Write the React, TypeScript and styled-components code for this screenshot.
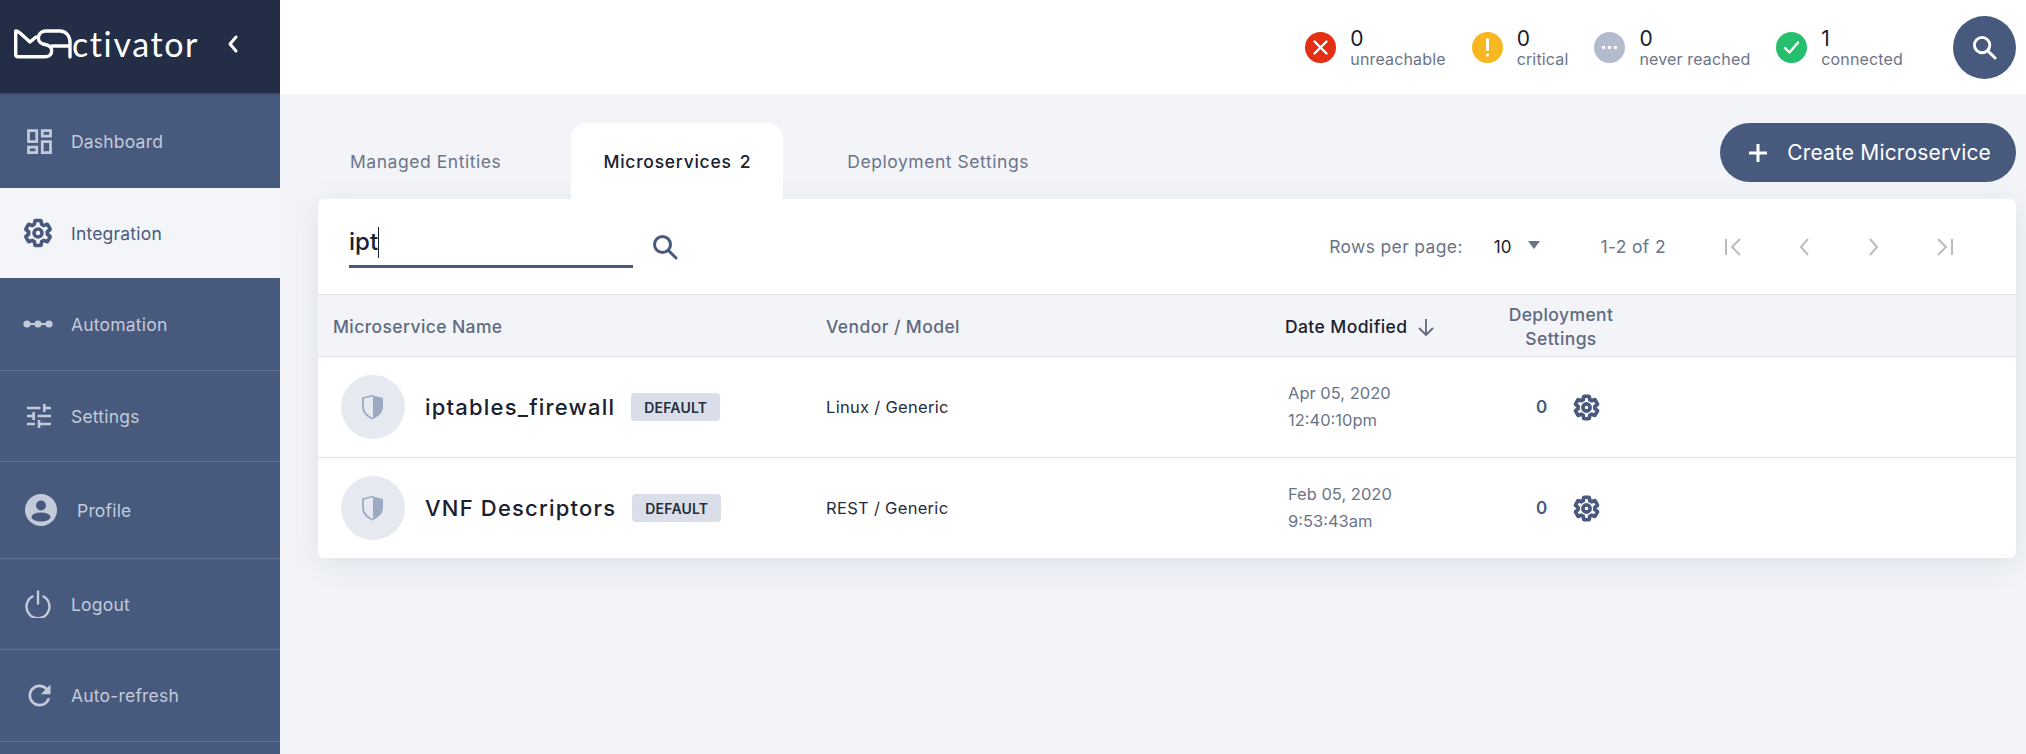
import React from "react";
import styled, { createGlobalStyle } from "styled-components";
import { MdOutlineDashboard, MdTune, MdRefresh } from "react-icons/md";

const FONT = `"Inter", "Roboto", "Liberation Sans", sans-serif`;

const GlobalStyle = createGlobalStyle`
  html, body {
    margin: 0;
    padding: 0;
    background: #f2f4f8;
    font-family: ${FONT};
  }
  * { box-sizing: border-box; }
`;

const navItems = [
  { key: "dashboard", label: "Dashboard", h: 93 },
  { key: "integration", label: "Integration", h: 90, active: true },
  { key: "automation", label: "Automation", h: 93, line: true },
  { key: "settings", label: "Settings", h: 91, line: true },
  { key: "profile", label: "Profile", h: 97, line: true },
  { key: "logout", label: "Logout", h: 91, line: true },
  { key: "refresh", label: "Auto-refresh", h: 92, line: true },
];

const statuses = [
  { kind: "red", value: 0, label: "unreachable" },
  { kind: "yellow", value: 0, label: "critical" },
  { kind: "grey", value: 0, label: "never reached" },
  { kind: "green", value: 1, label: "connected" },
];

const rows = [
  { name: "iptables_firewall", vendor: "Linux / Generic", date: "Apr 05, 2020", time: "12:40:10pm" },
  { name: "VNF Descriptors", vendor: "REST / Generic", date: "Feb 05, 2020", time: "9:53:43am" },
];

function Gear({ size, weight }: { size: number; weight: number }) {
  return (
    <svg width={size} height={size} viewBox="0 0 24 24" fill="none" stroke="currentColor" strokeWidth={weight} strokeLinejoin="round">
      <path d="M19.43 12.98c.04-.32.07-.64.07-.98 0-.34-.03-.66-.07-.98l2.11-1.65c.19-.15.24-.42.12-.64l-2-3.46c-.09-.16-.26-.25-.44-.25-.06 0-.12.01-.17.03l-2.49 1c-.52-.4-1.08-.73-1.69-.98l-.38-2.65C14.46 2.18 14.25 2 14 2h-4c-.25 0-.46.18-.49.42l-.38 2.65c-.61.25-1.17.59-1.69.98l-2.49-1c-.06-.02-.12-.03-.18-.03-.17 0-.34.09-.43.25l-2 3.46c-.13.22-.07.49.12.64l2.11 1.65c-.04.32-.07.65-.07.98 0 .33.03.66.07.98l-2.11 1.65c-.19.15-.24.42-.12.64l2 3.46c.09.16.26.25.44.25.06 0 .12-.01.17-.03l2.49-1c.52.4 1.08.73 1.69.98l.38 2.65c.03.24.24.42.49.42h4c.25 0 .46-.18.49-.42l.38-2.65c.61-.25 1.17-.59 1.69-.98l2.49 1c.06.02.12.03.18.03.17 0 .34-.09.43-.25l2-3.46c.12-.22.07-.49-.12-.64l-2.11-1.65z" />
      <circle cx="12" cy="12" r="3.2" />
    </svg>
  );
}

function NavIcon({ name }: { name: string }) {
  if (name === "dashboard") return <MdOutlineDashboard size={33} />;
  if (name === "integration") return <Gear size={30} weight={2.9} />;
  if (name === "settings") return <MdTune size={32} />;
  if (name === "refresh") return <MdRefresh size={33} />;
  if (name === "automation")
    return (
      <svg width="30" height="10" viewBox="0 0 30 10" fill="currentColor">
        <circle cx="4" cy="5" r="3.6" />
        <circle cx="15" cy="5" r="3.6" />
        <circle cx="26" cy="5" r="3.6" />
        <rect x="3" y="4" width="24" height="2" />
      </svg>
    );
  if (name === "profile")
    return (
      <svg width="32" height="32" viewBox="0 0 32 32">
        <circle cx="16" cy="16" r="16" fill="currentColor" />
        <circle cx="16" cy="11.5" r="5" fill="#475a7e" />
        <ellipse cx="16" cy="23" rx="9.5" ry="4.6" fill="#475a7e" />
      </svg>
    );
  return (
    <svg width="30" height="28" viewBox="-1 0 30 28" fill="none" stroke="currentColor" strokeWidth="2.4" strokeLinecap="round">
      <path d="M8.500 6.500a11.500 11.500 0 1 0 11 0" />
      <path d="M14 1.500v12" />
    </svg>
  );
}

function StatusIcon({ kind }: { kind: string }) {
  return (
    <StatusDot $kind={kind}>
      <svg width="31" height="31" viewBox="0 0 31 31" fill="none" stroke="#fff" strokeWidth="2.4" strokeLinecap="round" strokeLinejoin="round">
        {kind === "red" && <path d="M9.500 9.500l12 12M21.500 9.500l-12 12" />}
        {kind === "yellow" && (
          <>
            <path d="M15.500 7.500v10" strokeWidth="3" />
            <circle cx="15.500" cy="23" r="1.600" fill="#fff" stroke="none" />
          </>
        )}
        {kind === "grey" && (
          <g fill="#fff" stroke="none">
            <circle cx="9.500" cy="15.500" r="1.700" />
            <circle cx="15.500" cy="15.500" r="1.700" />
            <circle cx="21.500" cy="15.500" r="1.700" />
          </g>
        )}
        {kind === "green" && <path d="M9 16l4.500 4.500L22 10.500" />}
      </svg>
    </StatusDot>
  );
}

function SearchGlyph({ size, color }: { size: number; color: string }) {
  return (
    <svg width={size} height={size} viewBox="0 0 26 26" fill="none" stroke={color} strokeWidth="3" strokeLinecap="round">
      <circle cx="10.500" cy="10.500" r="8" />
      <path d="M16.500 16.500l7.500 7.500" />
    </svg>
  );
}

function Shield() {
  return (
    <svg width="24" height="26" viewBox="0 0 24 26">
      <path d="M12 1.500L22 4v9c0 5.500-4.500 9.500-10 12V1.500z" fill="#9ba9c2" />
      <path d="M12 1.500L2 4v9c0 5.500 4.500 9.500 10 12" fill="none" stroke="#9ba9c2" strokeWidth="1.800" strokeLinejoin="round" />
    </svg>
  );
}

function Pager({ dir }: { dir: "first" | "prev" | "next" | "last" }) {
  return (
    <svg width="20" height="20" viewBox="0 0 20 20" fill="none" stroke="#bcbcbc" strokeWidth="2">
      {dir === "first" && <path d="M2 2v16M16 2L8 10l8 8" />}
      {dir === "prev" && <path d="M14 2l-7 8 7 8" />}
      {dir === "next" && <path d="M6 2l7 8-7 8" />}
      {dir === "last" && <path d="M18 2v16M4 2l8 8-8 8" />}
    </svg>
  );
}

export default function App() {
  return (
    <Page>
      <GlobalStyle />
      <Sidebar>
        <Brand>
          <Logo>
            <svg width="58" height="30" viewBox="14 29 58 30" fill="none" stroke="#fff" strokeWidth="3.4" strokeLinejoin="round" strokeLinecap="round">
              <path d="M36 37L30 42L20 33Q17.500 31 15.700 31L15.700 54Q15.700 56.800 18 56.800L45 56.800C53 56.800 54 47 47 45L43 44C36 42 37 31 46 31L60 31C66 31 70 36 70 42L70 57M52 46L70 46" />
            </svg>
            <LogoText>ctivator</LogoText>
          </Logo>
          <Collapse>
            <svg width="14" height="20" viewBox="0 0 14 20" fill="none" stroke="#fff" strokeWidth="3" strokeLinecap="round" strokeLinejoin="round">
              <path d="M10 3l-6 7 6 7" />
            </svg>
          </Collapse>
        </Brand>
        {navItems.map((item) => (
          <NavItem key={item.key} $active={item.active} $line={item.line} $h={item.h}>
            <NavIconBox $wide={item.key === "profile"}>
              <NavIcon name={item.key} />
            </NavIconBox>
            {item.label}
          </NavItem>
        ))}
      </Sidebar>
      <Main>
        <TopBar>
          {statuses.map((s) => (
            <Status key={s.kind}>
              <StatusIcon kind={s.kind} />
              <StatusText>
                <StatusValue>{s.value}</StatusValue>
                <StatusLabel>{s.label}</StatusLabel>
              </StatusText>
            </Status>
          ))}
          <RoundButton>
            <SearchGlyph size={25} color="#fff" />
          </RoundButton>
        </TopBar>
        <Content>
          <TabRow>
            <Tab>Managed Entities</Tab>
            <Tab $active>
              Microservices <span>2</span>
            </Tab>
            <Tab>Deployment Settings</Tab>
            <CreateButton>
              <svg width="22" height="22" viewBox="0 0 22 22" stroke="#fff" strokeWidth="3">
                <path d="M11 2v18M2 11h18" />
              </svg>
              Create Microservice
            </CreateButton>
          </TabRow>
          <Card>
            <Toolbar>
              <SearchField>
                ipt<Caret />
              </SearchField>
              <SearchIcon>
                <SearchGlyph size={26} color="#475a7e" />
              </SearchIcon>
              <RowsLabel>Rows per page:</RowsLabel>
              <RowsValue>10</RowsValue>
              <RowsArrow />
              <RangeLabel>1-2 of 2</RangeLabel>
              <PagerGroup>
                <Pager dir="first" />
                <Pager dir="prev" />
                <Pager dir="next" />
                <Pager dir="last" />
              </PagerGroup>
            </Toolbar>
            <HeaderRow>
              <HeadCell>Microservice Name</HeadCell>
              <HeadCell>Vendor / Model</HeadCell>
              <SortCell>
                Date Modified
                <svg width="18" height="20" viewBox="0 0 18 20" fill="none" stroke="#5f6a80" strokeWidth="1.800">
                  <path d="M9 2v16M2 11l7 7 7-7" />
                </svg>
              </SortCell>
              <DeployHead>
                Deployment
                <br />
                Settings
              </DeployHead>
            </HeaderRow>
            {rows.map((row) => (
              <Row key={row.name}>
                <NameCell>
                  <ShieldCircle>
                    <Shield />
                  </ShieldCircle>
                  <RowName>{row.name}</RowName>
                  <Badge>DEFAULT</Badge>
                </NameCell>
                <VendorCell>{row.vendor}</VendorCell>
                <DateCell>
                  {row.date}
                  <br />
                  {row.time}
                </DateCell>
                <DeployCell>
                  <Count>0</Count>
                  <Gear size={27} weight={3.3} />
                </DeployCell>
              </Row>
            ))}
          </Card>
        </Content>
      </Main>
    </Page>
  );
}

const Page = styled.div`
  display: flex;
  width: 2026px;
  height: 754px;
  overflow: hidden;
  background: #f2f4f8;
`;

const Sidebar = styled.aside`
  width: 280px;
  flex: none;
  height: 754px;
  background: #475a7e;
`;

const Brand = styled.div`
  height: 95px;
  background: #232d45;
  border-bottom: 2px solid #3b4b6c;
  display: flex;
  align-items: flex-start;
  padding: 29px 0 0 14px;
`;

const Logo = styled.div`
  display: flex;
  align-items: flex-end;
  width: 204px;
`;

const LogoText = styled.span`
  font-family: "Lato", sans-serif;
  font-weight: 400;
  font-size: 34px;
  line-height: 30px;
  color: #fff;
  letter-spacing: 1.6px;
`;

const Collapse = styled.div`
  margin: 5px 0 0 8px;
`;

const NavItem = styled.div<{ $active?: boolean; $line?: boolean; $h: number }>`
  height: ${(p) => p.$h}px;
  display: flex;
  align-items: center;
  padding-left: 24px;
  font-size: 17.5px;
  letter-spacing: 0.2px;
  color: ${(p) => (p.$active ? "#475a7e" : "#c3cad9")};
  background: ${(p) => (p.$active ? "#f3f5f9" : "transparent")};
  border-bottom: ${(p) => (p.$line ? "1px solid #5f7092" : "none")};
`;

const NavIconBox = styled.span<{ $wide?: boolean }>`
  width: ${(p) => (p.$wide ? 52 : 48)}px;
  display: flex;
  align-items: center;
  justify-content: flex-start;
  margin-left: ${(p) => (p.$wide ? "1px" : "-1px")};
`;

const Main = styled.main`
  flex: 1;
  min-width: 0;
`;

const TopBar = styled.header`
  height: 94px;
  background: #fff;
  display: flex;
  align-items: center;
  justify-content: flex-end;
  padding-right: 10px;
  gap: 26px;
`;

const Status = styled.div`
  display: flex;
  align-items: center;
  gap: 14px;
`;

const StatusDot = styled.div<{ $kind: string }>`
  width: 31px;
  height: 31px;
  border-radius: 50%;
  background: ${(p) =>
    p.$kind === "red" ? "#e32f13" : p.$kind === "yellow" ? "#f8b720" : p.$kind === "grey" ? "#b2bccd" : "#26bf6d"};
`;

const StatusText = styled.div`
  display: flex;
  flex-direction: column;
`;

const StatusValue = styled.span`
  font-size: 21px;
  line-height: 24px;
  color: #1a2030;
`;

const StatusLabel = styled.span`
  font-size: 16px;
  line-height: 16px;
  letter-spacing: 0.15px;
  color: #6b7488;
`;

const RoundButton = styled.div`
  width: 63px;
  height: 63px;
  border-radius: 50%;
  background: #475a7e;
  display: flex;
  align-items: center;
  justify-content: center;
  margin-left: 24px;
`;

const Content = styled.div`
  padding: 29px 10px 0 38px;
`;

const TabRow = styled.div`
  display: flex;
  align-items: flex-start;
  height: 76px;
`;

const Tab = styled.div<{ $active?: boolean }>`
  height: 76px;
  display: flex;
  align-items: flex-start;
  gap: 8px;
  padding: 29px 32px 0;
  font-size: 17.5px;
  letter-spacing: ${(p) => (p.$active ? "0.75px" : "0.55px")};
  line-height: 20px;
  border-radius: 16px 16px 0 0;
  color: ${(p) => (p.$active ? "#1a2030" : "#6b7488")};
  background: ${(p) => (p.$active ? "#fff" : "transparent")};
  font-weight: ${(p) => (p.$active ? 500 : 400)};
  margin: ${(p) => (p.$active ? "0 32px 0 38px" : "0")};
`;

const CreateButton = styled.div`
  margin-left: auto;
  height: 59px;
  padding: 0 25px 0 27px;
  border-radius: 30px;
  background: #475a7e;
  color: #fff;
  font-size: 21px;
  letter-spacing: 0.15px;
  display: flex;
  align-items: center;
  gap: 18px;
`;

const Card = styled.section`
  background: #fff;
  border-radius: 6px;
  box-shadow: 0 6px 30px rgba(71, 90, 126, 0.12);
  overflow: hidden;
`;

const Toolbar = styled.div`
  height: 96px;
  display: flex;
  align-items: center;
  padding-left: 31px;
  border-bottom: 1px solid #e2e4e8;
`;

const SearchField = styled.div`
  align-self: flex-start;
  width: 284px;
  height: 41px;
  margin-top: 28px;
  border-bottom: 3px solid #475a7e;
  font-size: 24px;
  font-weight: 500;
  line-height: 30px;
  color: #1a2030;
  display: flex;
  align-items: flex-start;
`;

const Caret = styled.span`
  width: 1px;
  height: 31px;
  background: #1a2030;
  display: block;
`;

const SearchIcon = styled.div`
  margin-left: 19px;
  display: flex;
  margin-right: auto;
`;

const RowsLabel = styled.span`
  font-size: 17.5px;
  letter-spacing: 0.35px;
  color: #6b7488;
`;

const RowsValue = styled.span`
  font-size: 17px;
  color: #1a2030;
  margin-left: 31px;
`;

const RowsArrow = styled.span`
  width: 0;
  height: 0;
  border-left: 6.5px solid transparent;
  border-right: 6.5px solid transparent;
  border-top: 8px solid #6b7488;
  margin: 0 0 4px 17px;
`;

const RangeLabel = styled.span`
  font-size: 17.5px;
  letter-spacing: 0.35px;
  color: #6b7488;
  margin-left: 60px;
`;

const PagerGroup = styled.div`
  display: flex;
  gap: 50px;
  margin: 0 62px 0 58px;
`;

const columns = "508px 459px 206px 140px";

const HeaderRow = styled.div`
  display: grid;
  grid-template-columns: ${columns};
  align-items: center;
  height: 62px;
  padding-top: 2px;
  background: #f2f4f8;
  border-bottom: 1px solid #e2e4e8;
`;

const HeadCell = styled.div`
  font-size: 17.5px;
  font-weight: 500;
  letter-spacing: 0.4px;
  color: #5f6a80;
  &:first-child {
    padding-left: 15px;
  }
`;

const SortCell = styled.div`
  font-size: 17.5px;
  font-weight: 500;
  letter-spacing: 0.4px;
  color: #1a2030;
  display: flex;
  align-items: center;
  gap: 10px;
`;

const DeployHead = styled.div`
  font-size: 17.5px;
  font-weight: 500;
  letter-spacing: 0.4px;
  line-height: 24px;
  color: #5f6a80;
  text-align: center;
`;

const Row = styled.div`
  display: grid;
  grid-template-columns: ${columns};
  align-items: center;
  height: 101px;
  border-bottom: 1px solid #e2e4e8;
  &:last-child {
    height: 100px;
    border-bottom: none;
  }
`;

const NameCell = styled.div`
  display: flex;
  align-items: center;
  padding-left: 23px;
`;

const ShieldCircle = styled.div`
  width: 64px;
  height: 64px;
  border-radius: 50%;
  background: #e6e9f0;
  display: flex;
  align-items: center;
  justify-content: center;
`;

const RowName = styled.span`
  font-size: 22px;
  font-weight: 500;
  letter-spacing: 1.2px;
  color: #1a2030;
  margin-left: 20px;
`;

const Badge = styled.span`
  margin-left: 16px;
  height: 28px;
  padding: 0 13px;
  border-radius: 4px;
  background: #d9dee8;
  font-size: 14px;
  font-weight: 600;
  letter-spacing: 0.2px;
  color: #262d3d;
  display: flex;
  align-items: center;
`;

const VendorCell = styled.div`
  font-size: 16.5px;
  letter-spacing: 0.3px;
  color: #262d3d;
`;

const DateCell = styled.div`
  font-size: 16.5px;
  line-height: 27px;
  color: #6b7488;
  padding-left: 3px;
`;

const DeployCell = styled.div`
  display: flex;
  align-items: center;
  padding-left: 45px;
  gap: 26px;
  color: #475a7e;
`;

const Count = styled.span`
  font-size: 17px;
  font-weight: 600;
  color: #475a7e;
`;
